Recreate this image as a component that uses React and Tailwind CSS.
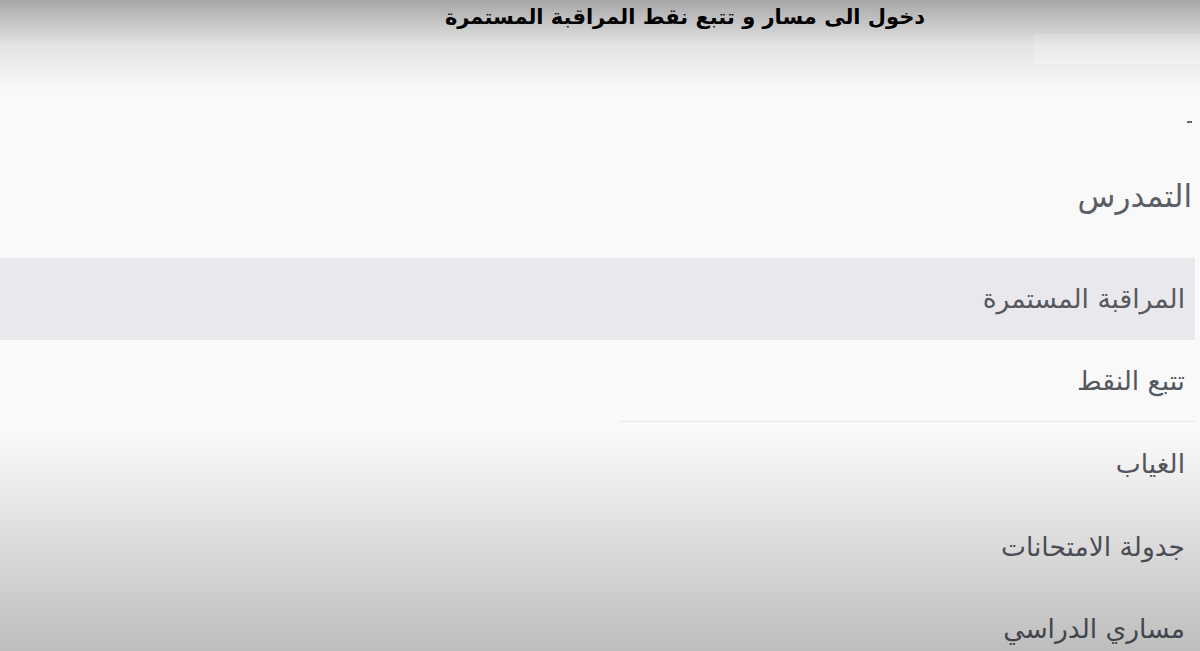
import React from 'react';

const items = [
  { label: 'المراقبة المستمرة', active: true },
  { label: 'تتبع النقط', divider: true },
  { label: 'الغياب', tall: true },
  { label: 'جدولة الامتحانات' },
  { label: 'مساري الدراسي' },
];

export default function App() {
  return (
    <div
      dir="rtl"
      className="relative h-[651px] w-[1200px] overflow-hidden bg-[#f9f9fa] font-['DejaVu_Sans',sans-serif]"
    >
      {/* Title strip */}
      <div className="flex h-[34px] items-center justify-center pl-[170px]">
        <h1 className="relative z-10 text-[21px] font-bold leading-none text-black">
          دخول الى مسار و تتبع نقط المراقبة المستمرة
        </h1>
      </div>

      <div className="flex h-[224px] justify-start">
        <div className="h-[30px] w-[167px] bg-white" />
      </div>

      {/* Section heading */}
      <div className="absolute right-[8px] top-[181px] text-[31px] leading-none text-[#5b5e66]">
        التمدرس
      </div>

      {/* Menu */}
      <ul className="mr-[5px]">
        {items.map((item) => (
          <li
            key={item.label}
            className={
              'relative flex items-center pr-[10px] text-[26.5px] text-[#55585f] ' +
              (item.tall ? 'h-[84px] ' : 'h-[82px] ') +
              (item.active ? 'bg-[#e9e8ec]' : '')
            }
          >
            {item.label}
            {item.divider && (
              <span className="absolute bottom-0 right-0 h-px w-[575px] bg-[#e9e9ea]" />
            )}
          </li>
        ))}
      </ul>

      {/* Top and bottom shading */}
      <div className="pointer-events-none absolute inset-x-0 top-0 h-[90px] bg-gradient-to-b from-[rgba(0,0,0,0.33)] via-[rgba(0,0,0,0.09)] to-transparent" />
      <div className="pointer-events-none absolute inset-x-0 bottom-0 h-[215px] bg-gradient-to-t from-[rgba(0,0,0,0.24)] to-transparent" />
      <div className="pointer-events-none absolute right-[8px] top-[121px] h-[2px] w-[5px] bg-[#666]" />
    </div>
  );
}
